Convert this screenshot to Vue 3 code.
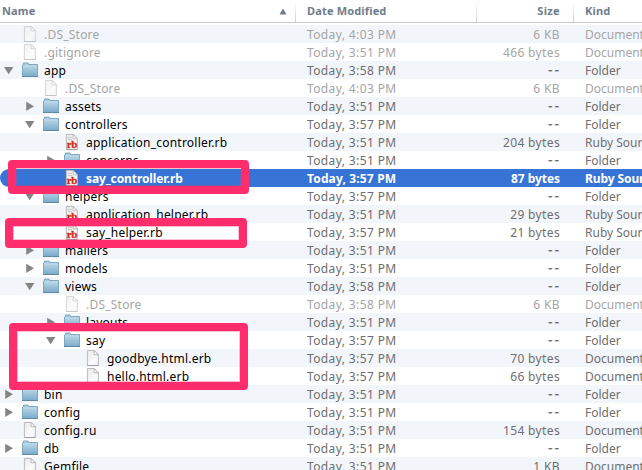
<script setup>
const d = 'Document', f = 'Folder', r = 'Ruby Source'
const rows = [
  ['.DS_Store', 0, 'doc', '', '4:03', '6 KB', d, 'dim'],
  ['.gitignore', 0, 'doc', '', '3:51', '466 bytes', d, 'dim'],
  ['app', 0, 'folder', 'open', '3:58', '--', f],
  ['.DS_Store', 1, 'doc', '', '4:03', '6 KB', d, 'dim'],
  ['assets', 1, 'folder', 'shut', '3:51', '--', f],
  ['controllers', 1, 'folder', 'open', '3:57', '--', f],
  ['application_controller.rb', 2, 'ruby', '', '3:51', '204 bytes', r],
  ['concerns', 2, 'folder', 'shut', '3:51', '--', f],
  ['say_controller.rb', 2, 'ruby', '', '3:57', '87 bytes', r, 'selected'],
  ['helpers', 1, 'folder', 'open', '3:57', '--', f],
  ['application_helper.rb', 2, 'ruby', '', '3:51', '29 bytes', r],
  ['say_helper.rb', 2, 'ruby', '', '3:57', '21 bytes', r],
  ['mailers', 1, 'folder', 'shut', '3:51', '--', f],
  ['models', 1, 'folder', 'shut', '3:51', '--', f],
  ['views', 1, 'folder', 'open', '3:58', '--', f],
  ['.DS_Store', 2, 'doc', '', '3:58', '6 KB', d, 'dim'],
  ['layouts', 2, 'folder', 'shut', '3:51', '--', f],
  ['say', 2, 'folder', 'open', '3:57', '--', f],
  ['goodbye.html.erb', 3, 'doc', '', '3:57', '70 bytes', d],
  ['hello.html.erb', 3, 'doc', '', '3:57', '66 bytes', d],
  ['bin', 0, 'folder', 'shut', '3:51', '--', f],
  ['config', 0, 'folder', 'shut', '3:51', '--', f],
  ['config.ru', 0, 'doc', '', '3:51', '154 bytes', d],
  ['db', 0, 'folder', 'shut', '3:51', '--', f],
  ['Gemfile', 0, 'doc', '', '3:51', '1 KB', d],
].map(([name, depth, icon, arrow, time, size, kind, state]) => ({ name, depth, icon, arrow, time, size, kind, state }))
</script>

<template>
  <div class="finder">
    <svg class="defs" width="0" height="0">
      <defs>
        <linearGradient id="folderFill" x1="0" y1="0" x2="0" y2="1">
          <stop offset="0" stop-color="#b3d2e4" /><stop offset="1" stop-color="#7eacc9" />
        </linearGradient>
        <linearGradient id="paperFill" x1="0" y1="0" x2="1" y2="1">
          <stop offset="0" stop-color="#e8e8e8" /><stop offset=".6" stop-color="#fafafa" /><stop offset="1" stop-color="#f0f0f0" />
        </linearGradient>
      </defs>
    </svg>
    <header class="grid head">
      <div class="hcell name-head"><span>Name</span>
        <svg width="8" height="7" viewBox="0 0 8 7"><path d="M4 .5 7.5 6.5H.5z" fill="#6f7c8c" /></svg>
      </div>
      <div class="hcell">Date Modified</div>
      <div class="hcell size">Size</div>
      <div class="hcell">Kind</div>
    </header>
    <main>
      <div v-for="(row, i) in rows" :key="i" class="grid row" :class="row.state">
        <div class="name" :class="'depth' + row.depth">
          <span class="arrow">
            <svg v-if="row.arrow" width="10" height="10" viewBox="0 0 10 10">
              <path :d="row.arrow === 'open' ? 'M0 2H9.4L4.7 9.3z' : 'M1.2 .7V9.9L9 5.3z'" fill="#858585" />
            </svg>
          </span>
          <svg v-if="row.icon === 'folder'" class="icon" width="16" height="16" viewBox="0 0 16 16">
            <path d="M.5 14V3L1.5 2.5V1H6l.8 1.5h8.7V14z" fill="#a9cbdf" stroke="#76a0bb" stroke-width=".9" />
            <path d="M1 4.5h14V14H1z" fill="url(#folderFill)" />
            <path d="M1 4h14" stroke="#c4deec" />
            <path d="M0 14.5h16" stroke="#5f8aa6" />
          </svg>
          <svg v-else class="icon" width="16" height="16" viewBox="0 0 16 16">
            <path d="M2.4 .5h6.7l4.3 4.3v10.7h-11z" fill="url(#paperFill)" stroke="#bcbcbc" />
            <path d="M9.1 .5v4.3h4.3z" fill="#fff" stroke="#aaa" stroke-width=".8" />
            <path d="M2.4 15.5h11" stroke="#a0a0a0" />
            <g v-if="row.icon === 'ruby'">
              <path d="M4 3.5h4M4 5.5h4" stroke="#b5b5b5" stroke-width=".7" />
              <text class="rb" x="2.8" y="13.5">rb</text>
            </g>
          </svg>
          <span class="label">{{ row.name }}</span>
        </div>
        <div class="date">Today, {{ row.time }} PM</div>
        <div class="size" :class="{ dashes: row.size === '--' }">{{ row.size }}</div>
        <div class="kind">{{ row.kind }}</div>
      </div>
    </main>
    <div class="mark mark-controller"></div>
    <div class="mark mark-helper"></div>
    <div class="mark mark-views"></div>
  </div>
</template>

<style>
body { margin: 0; overflow: hidden; background: #fff; }
</style>
<style scoped>
.finder { position: relative; width: 642px; height: 470px; overflow: hidden; background: #fff; font: 12px/20px "Noto Sans", "Open Sans", sans-serif; color: #6e6e6e; white-space: nowrap; }
.defs { position: absolute; }
.grid { display: grid; grid-template-columns: 295px 181px 97px 69px; }
.head { height: 22px; border-bottom: 1px solid #c6c6c9; margin-bottom: 2px; font-size: 11px; line-height: 18px; font-weight: 700; color: #6f7c8c; letter-spacing: .16px; }
.hcell { padding: 2px 0 0 12px; background: linear-gradient(#fff, #cfcfd3) left / 1px 100% no-repeat; }
.hcell.name-head { display: flex; justify-content: space-between; align-items: center; padding: 2px 8px 2px 2px; background: none; }
.row { height: 18px; }
.row:nth-child(odd) { background: #f2f6fb; }
.name { display: flex; align-items: center; height: 18px; color: #000; letter-spacing: .22px; }
.depth1 { padding-left: 21px; }
.depth2 { padding-left: 42px; }
.depth3 { padding-left: 63px; }
.arrow { display: flex; width: 18px; padding-left: 4px; }
.icon { margin-right: 6px; flex: none; }
.label { height: 18px; }
.date, .kind { padding-left: 12px; }
.date { letter-spacing: .38px; }
.size { text-align: right; padding-right: 13px; letter-spacing: .36px; }
.hcell.size { padding-left: 0; }
.dashes { font-size: 14px; line-height: 17px; letter-spacing: 2px; padding-right: 12px; -webkit-text-stroke: .2px #6e6e6e; }
.dim, .dim .name { color: #a5a5a5; }
.dim .icon { opacity: .6; }
.row.selected { background: #3874d6; color: #fff; font-weight: 700; border-radius: 9px 0 0 9px; }
.selected .name { color: #fff; letter-spacing: -.1px; }
.selected .date { letter-spacing: .15px; }
.selected .size { letter-spacing: -.05px; }
.selected .kind { letter-spacing: -.1px; }
.rb { font: 700 11px "Liberation Serif", serif; letter-spacing: -.5px; fill: #d62a20; stroke: #d62a20; stroke-width: .3px; }
.mark { position: absolute; box-sizing: border-box; border: 8px solid #ff2d6b; border-radius: 4px; box-shadow: inset 0 0 0 1px rgba(255, 45, 107, .3); }
.mark-controller { left: 8px; top: 160px; width: 241px; height: 34px; }
.mark-helper { left: 5px; top: 218px; width: 242px; height: 30px; }
.mark-views { left: 9px; top: 323px; width: 239px; height: 67px; }
</style>
